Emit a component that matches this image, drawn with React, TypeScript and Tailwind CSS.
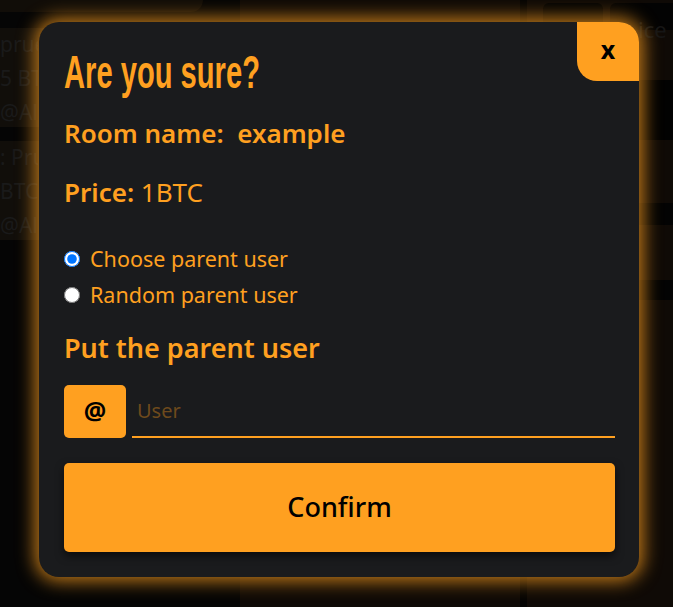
import React, { useState } from 'react';

const ui = { fontFamily: '"Noto Sans", "Open Sans", sans-serif' };
const narrow = { fontFamily: '"Liberation Sans", Arial, sans-serif' };

function Backdrop() {
  // dimmed page sitting under the modal
  const cards = [
    ['prueba', '5 BTC', '@Alan'],
    [': Prueba', 'BTC', '@Alan'],
  ];
  return (
    <div className="flex h-full w-full bg-[#0f0a06]" style={ui}>
      <div className="flex w-[240px] flex-col bg-[#050505]">
        <div className="h-[12px] w-[203px] rounded-br-[12px] bg-[#110d08]" />
        <div className="h-[16px]" />
        {cards.map((c, i) => (
          <div key={i} className={'h-[99px] bg-[#110e0a] ' + (i > 0 ? 'mt-[14px]' : '')}>
            <div className="flex h-full w-[38px] flex-col justify-center gap-[6px] overflow-hidden whitespace-nowrap text-[21px] leading-[28px] text-[#1a1a1a]">
              {c.map(t => <span key={t}>{t}</span>)}
            </div>
          </div>
        ))}
      </div>
      <div className="flex-1" />
      <div className="w-[7px] bg-[#050403]" />
      <div className="flex w-[146px] flex-col">
        <div className="flex gap-[7px] pl-[16px] pt-[3px]">
          <div className="h-[27px] w-[60px] rounded-[6px] bg-[#030303]" />
          <div className="h-[27px] flex-1 rounded-l-[6px] bg-[#030303]" />
        </div>
        <div className="-mt-[14px] h-[64px] pl-[90px] text-[22px] leading-[26px] text-[#161616]">
          <div className="w-[56px] overflow-hidden whitespace-nowrap pl-[21px]">ice</div>
        </div>
        <div className="h-[60px] bg-[#020202]" />
        <div className="h-[63px]" />
        <div className="h-[22px] bg-[#030303]" />
        <div className="h-[55px]" />
        <div className="h-[20px] bg-[#030303]" />
      </div>
    </div>
  );
}

export default function App() {
  const [mode, setMode] = useState('choose');

  return (
    <div className="relative h-[607px] w-[673px] overflow-hidden">
      <Backdrop />
      <div className="absolute inset-0 flex items-start pl-[39px] pt-[22px]">
        <div className="relative flex h-[555px] w-[600px] flex-col rounded-[20px] bg-[#1a1b1d] pl-[25px] pr-[24px] shadow-[0_0_18px_4px_rgba(255,160,32,0.75)]" style={ui}>
          <button className="absolute right-0 top-0 flex h-[59px] w-[62px] items-center justify-center rounded-bl-[20px] rounded-tr-[20px] bg-[#ffa020] pb-[4px] text-[25px] font-bold text-black">
            x
          </button>

          <h1 className="mt-[22px] origin-left scale-x-[0.62] whitespace-nowrap text-[47px] font-bold leading-[56px] text-[#ffa020]" style={narrow}>
            Are you sure?
          </h1>

          <p className="mt-[17px] text-[26px] leading-[32px] text-[#ffa020]">
            <span className="font-semibold">Room name:</span>&nbsp;&nbsp;<span className="font-semibold">example</span>
          </p>
          <p className="mt-[27px] text-[26px] leading-[32px] text-[#ffa020]">
            <span className="font-semibold">Price:</span> <span>1BTC</span>
          </p>

          <div className="mt-[36px] flex flex-col gap-[7px] text-[21.5px] leading-[29px] text-[#ffa020]">
            <label className="flex items-center gap-[10px]">
              <input type="radio" name="parent" checked={mode === 'choose'} onChange={() => setMode('choose')} className="h-4 w-4" />
              Choose parent user
            </label>
            <label className="flex items-center gap-[10px]">
              <input type="radio" name="parent" checked={mode === 'random'} onChange={() => setMode('random')} className="h-4 w-4" />
              Random parent user
            </label>
          </div>

          <h2 className="mt-[22px] text-[27px] font-semibold leading-[34px] text-[#ffa020]">Put the parent user</h2>

          <div className="mt-[20px] flex items-end gap-[6px]">
            <div className="flex h-[53px] w-[62px] items-center justify-center rounded-[5px] bg-[#ffa020] pb-[2px] text-[25px] font-bold text-black">@</div>
            <input
              placeholder="User"
              className="h-[53px] flex-1 border-b-2 border-[#ffa020] bg-transparent px-[5px] text-[20px] text-[#ffa020] outline-none placeholder:text-[#6e4a1c]"
            />
          </div>

          <button className="mt-[25px] h-[89px] w-full rounded-[5px] bg-[#ffa020] text-[27px] font-medium text-black shadow-[0_4px_8px_rgba(0,0,0,0.6)]">
            Confirm
          </button>
        </div>
      </div>
    </div>
  );
}
